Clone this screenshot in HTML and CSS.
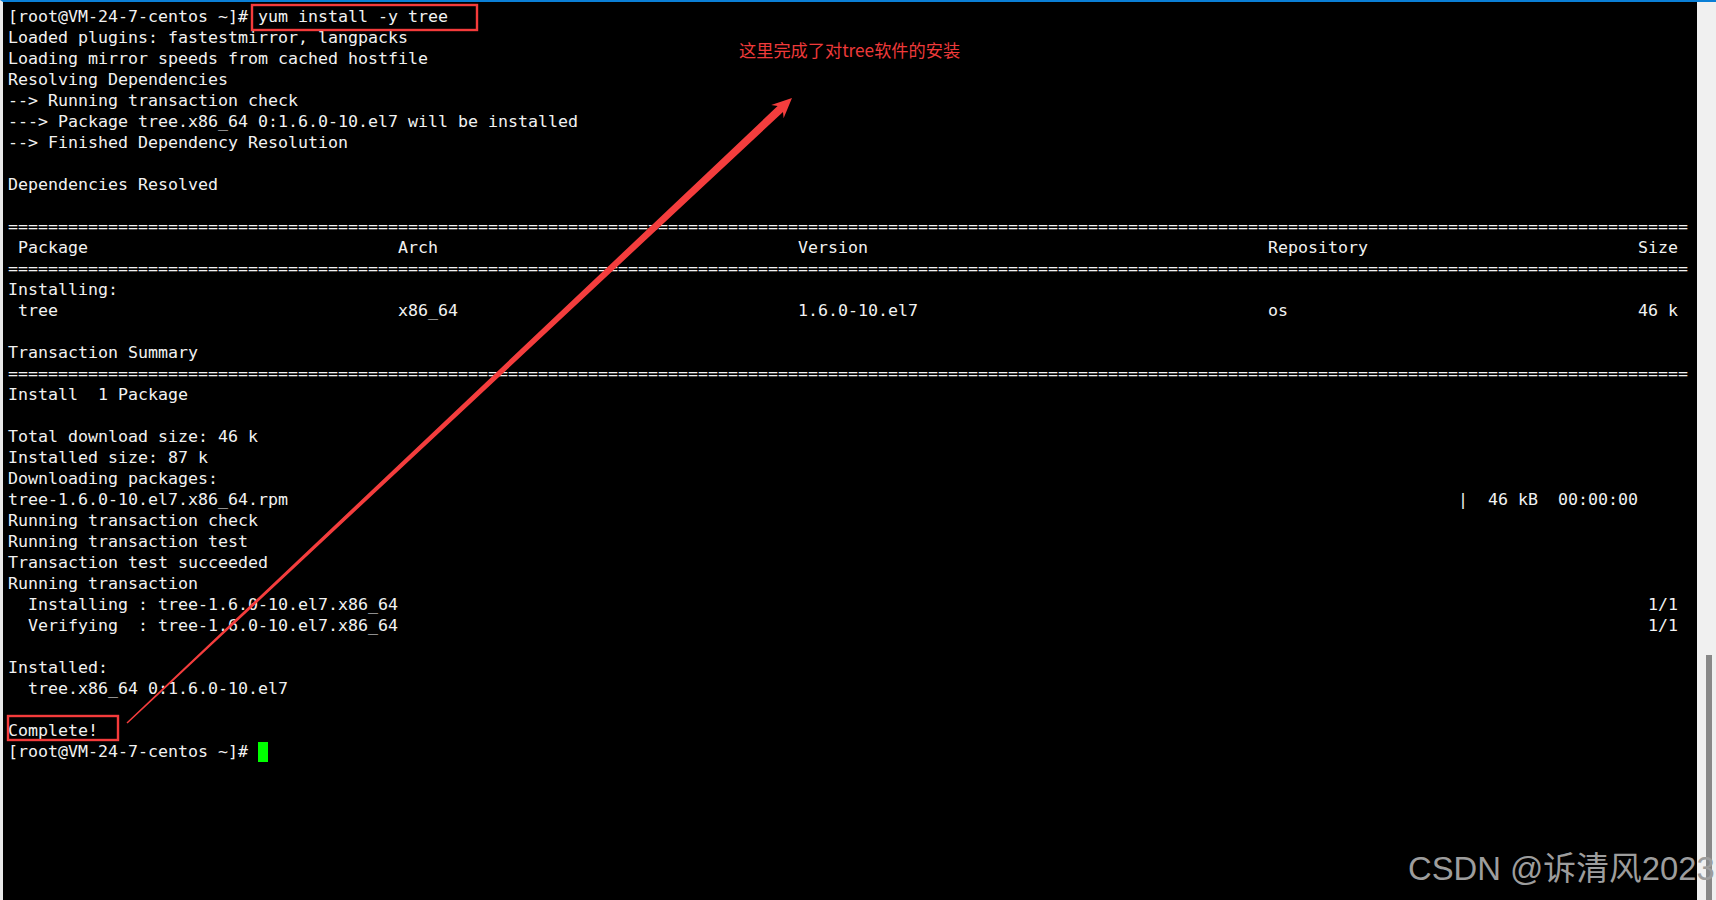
FILE: index.html
```html
<!DOCTYPE html>
<html lang="zh-CN">

<head>
  <meta charset="utf-8">
  <title>yum install -y tree</title>
  <link rel="stylesheet" href="styles.css">
</head>

<body>
  <div class="screen">
    <div class="term">
      <div class="line">[root@VM-24-7-centos ~]# yum install -y tree</div>
      <div class="line">Loaded plugins: fastestmirror, langpacks</div>
      <div class="line">Loading mirror speeds from cached hostfile</div>
      <div class="line">Resolving Dependencies</div>
      <div class="line">--&gt; Running transaction check</div>
      <div class="line">---&gt; Package tree.x86_64 0:1.6.0-10.el7 will be installed</div>
      <div class="line">--&gt; Finished Dependency Resolution</div>
      <div class="line"></div>
      <div class="line">Dependencies Resolved</div>
      <div class="line"></div>
      <div class="line rule"></div>
      <div class="line cols"><span> Package</span><span>Arch</span><span>Version</span><span>Repository</span><span>Size</span></div>
      <div class="line rule"></div>
      <div class="line">Installing:</div>
      <div class="line cols"><span> tree</span><span>x86_64</span><span>1.6.0-10.el7</span><span>os</span><span>46 k</span></div>
      <div class="line"></div>
      <div class="line">Transaction Summary</div>
      <div class="line rule"></div>
      <div class="line">Install  1 Package</div>
      <div class="line"></div>
      <div class="line">Total download size: 46 k</div>
      <div class="line">Installed size: 87 k</div>
      <div class="line">Downloading packages:</div>
      <div class="line dl"><span>tree-1.6.0-10.el7.x86_64.rpm</span><span>|  46 kB  00:00:00</span></div>
      <div class="line">Running transaction check</div>
      <div class="line">Running transaction test</div>
      <div class="line">Transaction test succeeded</div>
      <div class="line">Running transaction</div>
      <div class="line step"><span>  Installing : tree-1.6.0-10.el7.x86_64</span><span>1/1</span></div>
      <div class="line step"><span>  Verifying  : tree-1.6.0-10.el7.x86_64</span><span>1/1</span></div>
      <div class="line"></div>
      <div class="line">Installed:</div>
      <div class="line">  tree.x86_64 0:1.6.0-10.el7</div>
      <div class="line"></div>
      <div class="line">Complete!</div>
      <div class="line">[root@VM-24-7-centos ~]# <span class="cursor"></span></div>
    </div>
    <div class="scrollbar">
      <div class="thumb"></div>
    </div>

    <!-- annotation layer -->
    <svg class="marks" width="1716" height="900" viewBox="0 0 1716 900">
      <rect x="252" y="5" width="225" height="25" />
      <rect x="8" y="716" width="110" height="24" />
      <polygon class="arrow" points="127.5,723.6 783.0,111.9 783.6,118.3 792,98 771.2,105.1 777.6,106.1 126.5,722.4" />
    </svg>
    <div class="note">这里完成了对tree软件的安装</div>
    <div class="watermark">CSDN @诉清风2023</div>
  </div>
  <script>
    // separator rows are the terminal width: 168 columns
    for (const el of document.querySelectorAll('.rule')) {
      el.textContent = '='.repeat(168)
    }
  </script>
</body>

</html>
```

FILE: styles.css
```css
*,
*:before,
*:after {
  box-sizing: border-box
}

body {
  margin: 0;
  background: #000;
  overflow: hidden
}

.screen {
  position: relative;
  display: flex;
  height: 900px
}

.term {
  flex: 1;
  background: #000;
  border-left: 3px solid #e9e9e9;
  border-top: 2px solid #0a7fd6;
  padding: 4px 0 0 5px;
  color: #f2f2f2;
  font-family: "DejaVu Sans Mono", "Liberation Mono", monospace;
  font-size: 16.61px
}

.line {
  height: 21px;
  line-height: 21px;
  white-space: pre
}

.cols {
  display: grid;
  grid-template-columns: 39ch 40ch 47ch 37ch auto
}

.dl {
  display: grid;
  grid-template-columns: 145ch auto
}

.step {
  display: grid;
  grid-template-columns: 164ch auto
}

.cursor {
  display: inline-block;
  vertical-align: top;
  width: 1ch;
  height: 20px;
  margin-top: 1px;
  background: #00ff00
}

.scrollbar {
  width: 19px;
  background: #f0f0f0;
  border-top: 2px solid #0a7fd6;
  display: flex;
  flex-direction: column;
  justify-content: flex-end;
  padding-left: 9px
}

.thumb {
  width: 6px;
  height: 245px;
  background: #888
}

.marks {
  position: absolute;
  left: 0;
  top: 0;
  pointer-events: none
}

.marks rect {
  fill: none;
  stroke: #f53b3b;
  stroke-width: 2.4
}

.arrow {
  fill: #f43d3d
}

.note {
  position: absolute;
  left: 739px;
  top: 40px;
  line-height: 20px;
  font-family: "Noto Sans CJK SC", sans-serif;
  font-size: 17.2px;
  color: #ee3a3a
}

.watermark {
  position: absolute;
  left: 1408px;
  top: 851px;
  line-height: 36px;
  font-family: "Liberation Sans", "Noto Sans CJK SC", sans-serif;
  font-size: 32.8px;
  color: #9d9d9d;
  white-space: nowrap
}
```
